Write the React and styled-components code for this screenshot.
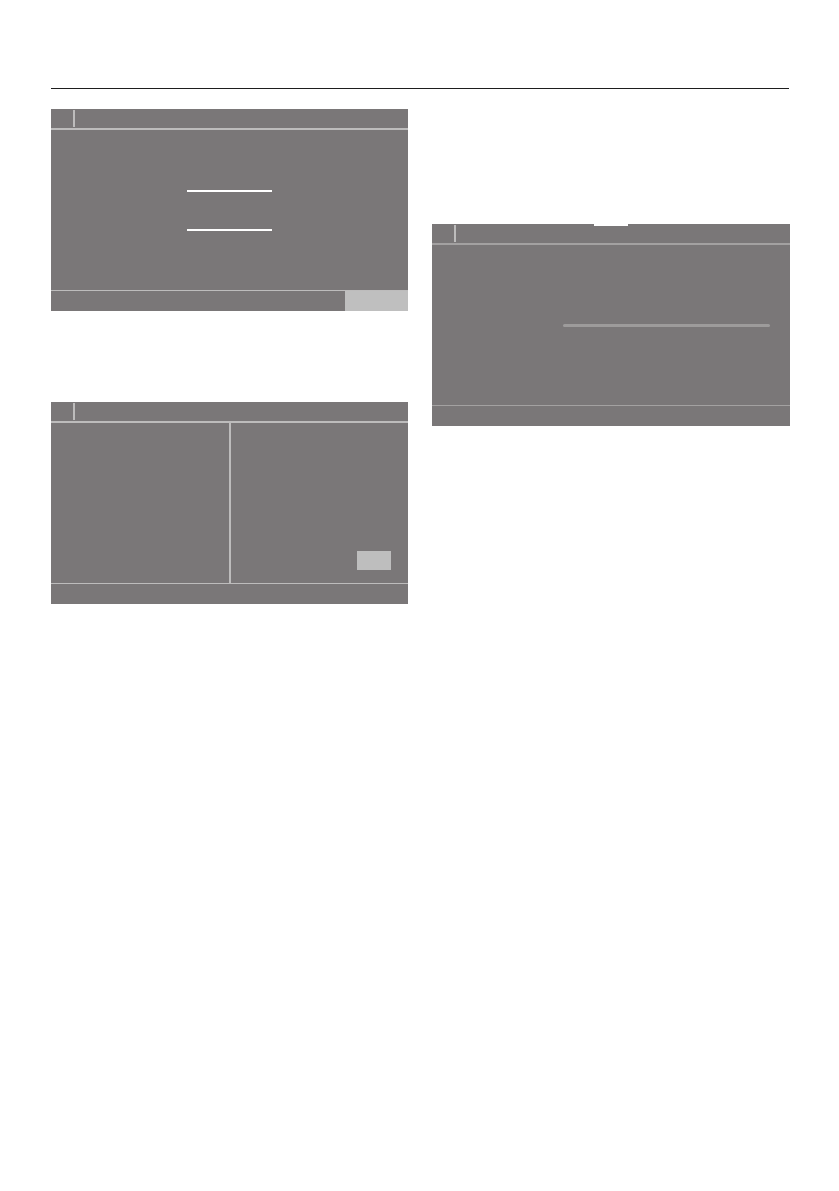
import React from 'react';
import styled, { createGlobalStyle } from 'styled-components';

const panelGrey = '#7a7778';
const lineGrey = '#bdbcbc';

const GlobalStyle = createGlobalStyle`
  html, body {
    margin: 0;
    padding: 0;
    background: #ffffff;
    font-family: "Liberation Sans", Arial, sans-serif;
  }
`;

const Page = styled.div`
  width: 839px;
  height: 1191px;
  padding-top: 88px;
  box-sizing: border-box;
  background: #ffffff;
`;

const Rule = styled.div`
  margin: 0 50px 0 51px;
  height: 1px;
  background: #1e1e1e;
`;

const Columns = styled.div`
  display: flex;
  gap: 24px;
  padding: 20px 49px 0 51px;
`;

const Column = styled.div`
  display: flex;
  flex-direction: column;
  gap: 91px;
  width: ${(p) => p.width || 357}px;
  padding-top: ${(p) => p.offset || 0}px;
`;

const Panel = styled.div`
  position: relative;
  display: flex;
  flex-direction: column;
  height: 202px;
  background: ${panelGrey};
`;

const Notch = styled.div`
  position: absolute;
  top: 0;
  left: ${(p) => p.left}px;
  width: 34px;
  height: 2px;
  background: #ffffff;
`;

const Header = styled.div`
  display: flex;
  align-items: flex-end;
  height: 21px;
  border-bottom: 2px solid ${(p) => p.line || lineGrey};
  box-sizing: border-box;
  padding-left: 22px;
`;

const HeaderDivider = styled.div`
  width: 1.5px;
  height: 17px;
  margin-bottom: 1px;
  background: ${lineGrey};
`;

const Body = styled.div`
  flex: 1;
  display: flex;
  flex-direction: ${(p) => p.direction || 'column'};
  align-items: ${(p) => p.align || 'center'};
  justify-content: ${(p) => p.justify || 'center'};
  gap: ${(p) => p.gap || 0}px;
  padding-right: ${(p) => p.padRight || 0}px;
  box-sizing: border-box;
`;

const InputLine = styled.div`
  width: 85px;
  height: 2px;
  background: #ffffff;
`;

const Pane = styled.div`
  flex: ${(p) => p.grow || 1};
  display: flex;
  align-items: flex-end;
  justify-content: flex-end;
  padding: 0 17px 13px 0;
  border-left: ${(p) => (p.divided ? `2px solid ${lineGrey}` : 'none')};
`;

const SmallButton = styled.div`
  width: 34px;
  height: 19px;
  background: #bebebe;
`;

const Slider = styled.div`
  width: 207px;
  height: 3px;
  border-radius: 2px;
  background: #9d9b9b;
`;

const Footer = styled.div`
  display: flex;
  justify-content: flex-end;
  height: 21px;
  border-top: 1.5px solid ${(p) => p.line || lineGrey};
  box-sizing: border-box;
`;

const FooterButton = styled.div`
  width: 63px;
  background: #bfbfbf;
`;

export default function App() {
  return (
    <>
      <GlobalStyle />
      <Page>
        <Rule />
        <Columns>
          <Column>
            <Panel>
              <Header>
                <HeaderDivider />
              </Header>
              <Body gap={37}>
                <InputLine />
                <InputLine />
              </Body>
              <Footer>
                <FooterButton />
              </Footer>
            </Panel>
            <Panel>
              <Header>
                <HeaderDivider />
              </Header>
              <Body direction="row" align="stretch" justify="stretch">
                <Pane grow={178} />
                <Pane grow={177} divided>
                  <SmallButton />
                </Pane>
              </Body>
              <Footer />
            </Panel>
          </Column>
          <Column width={358} offset={115}>
            <Panel>
              <Notch left={162} />
              <Header line="#a3a1a1">
                <HeaderDivider />
              </Header>
              <Body direction="row" justify="flex-end" padRight={20}>
                <Slider />
              </Body>
              <Footer line="#a3a1a1" />
            </Panel>
          </Column>
        </Columns>
      </Page>
    </>
  );
}
